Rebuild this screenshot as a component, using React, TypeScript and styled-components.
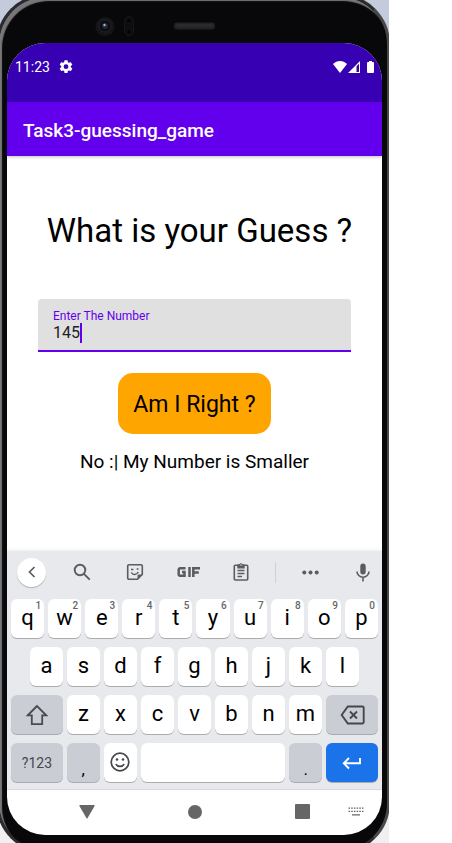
import React, { useState } from "react";
import styled, { createGlobalStyle } from "styled-components";

const Global = createGlobalStyle`
  * { box-sizing: border-box; }
  body { margin: 0; background: #fff; font-family: Roboto, "Noto Sans", sans-serif; color: #000; }
  button, input { font: inherit; color: inherit; }
  button { border: 0; margin: 0; padding: 0; cursor: pointer; background: none; }
`;

const Stage = styled.div`
  margin-right: 63px;
  min-height: 100vh;
  display: flex;
  background: linear-gradient(#c3cbdd 0 50%, #f0f0f0 50%);
  overflow: hidden;
`;

const Device = styled.div`
  flex: 1;
  min-width: 0;
  display: flex;
  flex-direction: column;
  margin: -6px -1px -10px -4px;
  padding: 0 5px 15px 8px;
  background: #08080a;
  border: 3px solid #2c2c2e;
  border-right-color: #48484a;
  border-radius: 50px;
  box-shadow: inset 3px 4px 1px #77777a;
`;

const Bezel = styled.div`
  flex: 0 0 46px;
  display: flex;
  justify-content: center;
  padding: 5px 60px 0 0;
`;

const Screen = styled.main`
  flex: 1;
  display: flex;
  flex-direction: column;
  background: #fff;
  border-radius: 38px;
  overflow: hidden;
`;

const StatusBar = styled.header`
  height: 59px;
  flex: none;
  display: flex;
  align-items: flex-start;
  justify-content: space-between;
  padding: 15px 8px 0 8px;
  background: #3700b3;
  color: #fff;
  font-size: 14px;
  line-height: 18px;
`;

const StatusGroup = styled.div<{ $gap: number }>`
  display: flex;
  align-items: center;
  gap: ${(p) => p.$gap}px;
  height: 18px;
`;

const AppBar = styled.div`
  height: 54px;
  flex: none;
  display: flex;
  align-items: center;
  padding: 4px 16px 0;
  background: #6200ee;
  color: #fff;
  box-shadow: 0 1px 3px rgba(0, 0, 0, 0.25);
`;

const AppTitle = styled.h1`
  margin: 0;
  font-size: 19px;
  line-height: 24px;
  font-weight: 500;
`;

const Content = styled.form`
  flex: 1;
  display: flex;
  flex-direction: column;
  align-items: center;
  padding: 55px 31px 0 31px;
`;

const Question = styled.h2`
  margin: 0 0 48px 10px;
  font-size: 33px;
  line-height: 40px;
  font-weight: 400;
  white-space: nowrap;
`;

const Field = styled.label`
  width: 100%;
  height: 53px;
  display: flex;
  flex-direction: column;
  padding: 10px 15px 0;
  background: #e0e0e0;
  border-bottom: 2px solid #6200ee;
  border-radius: 4px 4px 0 0;
`;

const FieldLabel = styled.span`
  color: #6200ee;
  font-size: 12px;
  line-height: 14px;
`;

const Entry = styled.span`
  display: flex;
  align-items: center;
  height: 20px;
`;

const NumberInput = styled.input`
  field-sizing: content;
  border: 0;
  padding: 0;
  background: transparent;
  outline: none;
  color: #212121;
  font-size: 16px;
  line-height: 20px;
  caret-color: transparent;
`;

const Caret = styled.span`
  width: 2px;
  height: 20px;
  background: #6200ee;
`;

const GuessButton = styled.button`
  margin-top: 21px;
  height: 61px;
  padding: 2px 15px 0;
  background: #ffa500;
  border-radius: 15px;
  font-size: 23px;
  line-height: 28px;
`;

const Result = styled.p`
  margin: 16px 0;
  font-size: 19px;
  line-height: 24px;
`;

const Keyboard = styled.section`
  flex: none;
  background: #e8e9ed;
  padding: 0 4px 7px;
  box-shadow: 0 -1px 3px rgba(0, 0, 0, 0.08);
  border-bottom: 1px solid #d8d9dc;
`;

const Tools = styled.div`
  height: 48px;
  display: flex;
  align-items: center;
  justify-content: space-between;
  padding: 0 3px 6px 6px;
  color: #5b5c60;
`;

const ToolGroup = styled.div<{ $gap: number }>`
  display: flex;
  align-items: center;
  gap: ${(p) => p.$gap}px;
`;

const Tool = styled.button<{ $round?: boolean }>`
  width: ${(p) => (p.$round ? 29 : 24)}px;
  height: ${(p) => (p.$round ? 29 : 24)}px;
  margin-right: ${(p) => (p.$round ? -5 : 0)}px;
  display: grid;
  place-items: center;
  border-radius: 50%;
  background: ${(p) => (p.$round ? "#fff" : "none")};
  box-shadow: ${(p) => (p.$round ? "0 1px 1px rgba(0,0,0,.25)" : "none")};
`;

const Divider = styled.span`
  width: 1px;
  height: 21px;
  background: #cfd0d4;
`;

const KeyRow = styled.div<{ $inset?: boolean }>`
  display: flex;
  gap: 4px;
  padding: 0 ${(p) => (p.$inset ? 19 : 0)}px;
  margin-bottom: 9px;
  &:last-child { margin-bottom: 0; }
`;

const Key = styled.button<{ $grow?: number; $tone?: "grey" | "blue"; $small?: boolean; $low?: boolean }>`
  position: relative;
  flex: ${(p) => p.$grow ?? 33} 1 0;
  min-width: 0;
  height: 39px;
  display: grid;
  place-items: center;
  padding-top: ${(p) => (p.$low ? 12 : 0)}px;
  padding-bottom: ${(p) => (p.$grow || p.$low ? 0 : 2)}px;
  border-radius: 6px;
  background: ${(p) => (p.$tone === "blue" ? "#1a73e8" : p.$tone === "grey" ? "#cbcdd5" : "#fff")};
  color: ${(p) => (p.$tone === "blue" ? "#fff" : p.$small ? "#46474b" : "#000")};
  box-shadow: 0 1px 0 rgba(0, 0, 0, 0.26);
  font-size: ${(p) => (p.$small ? 14 : p.$low ? 17 : 22)}px;
  line-height: 26px;
`;

const Hint = styled.small`
  position: absolute;
  top: 1px;
  right: 3px;
  color: #65666a;
  font-size: 10px;
  line-height: 12px;
  font-weight: 500;
`;

const NavRow = styled.nav`
  flex: none;
  height: 45px;
  display: flex;
  align-items: center;
  justify-content: space-between;
  padding: 0 18px 2px 72px;
  color: #666;
`;

const NavTail = styled.div`
  display: flex;
  align-items: center;
  gap: 38px;
`;

const NavButton = styled.button`
  display: grid;
  place-items: center;
  height: 32px;
`;

const BezelArt = () => (
  <svg width="144" height="41" viewBox="0 0 144 41" aria-hidden="true">
    <circle cx="12" cy="24.500" r="9.500" fill="#151517" />
    <circle cx="12" cy="24" r="6" fill="#0b0c10" stroke="#222327" />
    <circle cx="12" cy="24" r="3" fill="#20283a" />
    <circle cx="11.500" cy="23" r="1.200" fill="#a9b3c8" />
    <rect x="31.500" y="14.500" width="9" height="19" rx="4.500" fill="#0d0d0e" stroke="#161617" />
    <circle cx="36" cy="18.500" r="3" fill="#050506" stroke="#151516" />
    <circle cx="36" cy="29.500" r="3" fill="#050506" stroke="#151516" />
    <rect x="81" y="20.500" width="41" height="7" rx="3" fill="#222" />
    <rect x="83" y="22" width="37" height="3" rx="1.500" fill="#2b2b2b" />
  </svg>
);

const GEAR =
  "M19.140 12.940c.04-.3.060-.61.060-.94s-.02-.64-.07-.94l2.030-1.580a.49.49 0 0 0 .12-.61l-1.920-3.320a.49.49 0 0 0-.59-.22l-2.390.96a7 7 0 0 0-1.620-.94l-.36-2.540a.48.48 0 0 0-.48-.41h-3.840a.48.48 0 0 0-.47.410l-.36 2.540a7 7 0 0 0-1.620.940l-2.390-.96a.48.48 0 0 0-.59.220L2.740 8.870a.48.48 0 0 0 .12.610l2.030 1.580a6 6 0 0 0 0 1.880l-2.030 1.580a.49.49 0 0 0-.12.610l1.920 3.320c.12.220.37.290.59.220l2.390-.96c.5.380 1.030.7 1.620.940l.36 2.540c.05.240.240.410.480.410h3.840c.240 0 .44-.17.470-.41l.36-2.540a7 7 0 0 0 1.620-.94l2.390.96c.22.080.47 0 .59-.22l1.920-3.320a.48.48 0 0 0-.12-.61zM12 15.600A3.600 3.600 0 1 1 12 8.400a3.600 3.600 0 0 1 0 7.200z";

const Gear = () => (
  <svg width="14" height="14" viewBox="1.500 2 21 21" fill="currentColor" aria-hidden="true"><path fillRule="evenodd" d={GEAR} /></svg>
);
const Wifi = () => (
  <svg width="14" height="12" viewBox="0 0 14 12" fill="currentColor" aria-hidden="true"><path d="M0 3C2 1 4.300 0 7 0s5 1 7 3L7 12z" /></svg>
);
const Signal = () => (
  <svg width="12" height="12" viewBox="0 0 12 12" fill="currentColor" aria-hidden="true">
    <path fillRule="evenodd" d="M0 12 12 0v12zM11 2.800V11H8.500V5.300z" />
  </svg>
);
const Battery = () => (
  <svg width="7" height="12" viewBox="0 0 7 12" fill="currentColor" aria-hidden="true"><path d="M2 0h3v1h1a1 1 0 0 1 1 1v9a1 1 0 0 1-1 1H1a1 1 0 0 1-1-1V2a1 1 0 0 1 1-1h1z" /></svg>
);
const Back = () => (
  <svg width="16" height="16" viewBox="0 0 16 16" fill="none" stroke="currentColor" strokeWidth="1.700" aria-hidden="true"><path d="M10.500 3 5.500 8l5 5" /></svg>
);
const Search = () => (
  <svg width="18" height="18" viewBox="0 0 18 18" fill="none" stroke="currentColor" strokeWidth="1.900" aria-hidden="true"><circle cx="7" cy="7" r="5.300" /><path d="m10.700 10.700 6 6" /></svg>
);
const Sticker = () => (
  <svg width="18" height="18" viewBox="0 0 18 18" fill="none" stroke="currentColor" strokeWidth="1.600" aria-hidden="true">
    <path d="M3 1.800h12a1.300 1.300 0 0 1 1.300 1.300v8.400l-4.800 4.800H3A1.300 1.300 0 0 1 1.700 15V3.100A1.300 1.300 0 0 1 3 1.800z" />
    <path d="M16 11.500h-3.200a1.300 1.300 0 0 0-1.300 1.300V16z" fill="currentColor" stroke="none" />
    <path d="M5.300 9.500c1.500 2.700 5.500 2.500 7-.5M5 6.500h2.400M10.700 6.100h1.800" strokeWidth="1.500" />
  </svg>
);
const Gif = () => (
  <svg width="23" height="12" viewBox="0 0 23 12" fill="none" stroke="currentColor" strokeWidth="2.500" aria-hidden="true">
    <path d="M8.500 2.300H3.200a1.500 1.500 0 0 0-1.500 1.500v4.400a1.500 1.500 0 0 0 1.500 1.500h4.300V6H5M12.500 1v10M16.300 11V2.300H23M16.300 6.500h5.500" />
  </svg>
);
const Clipboard = () => (
  <svg width="16" height="20" viewBox="0 0 16 20" fill="none" stroke="currentColor" strokeWidth="1.600" aria-hidden="true">
    <rect x="1.300" y="3.300" width="13.400" height="14.700" rx="1" />
    <path d="M4.300 2.500h2a1.800 1.800 0 0 1 3.400 0h2v4H4.300z" fill="currentColor" stroke="none" />
    <circle cx="8" cy="3" r=".7" fill="#e8e9ed" stroke="none" />
    <path d="M4.500 8.500h7M4.500 11.500h7M4.500 14.500h4.500" strokeWidth="1.400" />
  </svg>
);
const Dots = () => (
  <svg width="17" height="5" viewBox="0 0 17 5" fill="currentColor" aria-hidden="true"><circle cx="2.300" cy="2.500" r="2" /><circle cx="8.500" cy="2.500" r="2" /><circle cx="14.700" cy="2.500" r="2" /></svg>
);
const Mic = () => (
  <svg width="14" height="19" viewBox="0 0 14 19" fill="none" stroke="currentColor" strokeWidth="1.600" aria-hidden="true">
    <rect x="4.300" y="0.500" width="5.400" height="11" rx="2.700" fill="currentColor" stroke="none" />
    <path d="M1 8.500a6 5.700 0 0 0 12 0M7 14v4.500" />
  </svg>
);
const Shift = () => (
  <svg width="22" height="22" viewBox="0 0 22 22" fill="none" stroke="#4a4b50" strokeWidth="1.800" aria-hidden="true"><path d="M11 2 1.800 11.300h4v8.800h10.400v-8.800h4z" /></svg>
);
const Delete = () => (
  <svg width="25" height="20" viewBox="0 0 25 20" fill="none" stroke="#46474b" strokeWidth="1.900" aria-hidden="true"><path d="M7.800 1.500h14.700a1.200 1.200 0 0 1 1.200 1.200v14.600a1.200 1.200 0 0 1-1.200 1.200H7.800L1.700 10zM10 6.500l7 7M17 6.500l-7 7" /></svg>
);
const Smile = () => (
  <svg width="20" height="20" viewBox="0 0 20 20" fill="none" stroke="#46474b" strokeWidth="1.700" aria-hidden="true">
    <circle cx="10" cy="10" r="8.800" /><path d="M5.800 12.200c1.700 3 6.700 3 8.400 0" />
    <circle cx="7" cy="7.500" r="1.300" fill="#46474b" stroke="none" /><circle cx="13" cy="7.500" r="1.300" fill="#46474b" stroke="none" />
  </svg>
);
const Enter = () => (
  <svg width="20" height="14" viewBox="0 0 20 14" fill="none" stroke="currentColor" strokeWidth="1.900" aria-hidden="true"><path d="M18 2v5.300H2.500M7 2 1.800 7.300 7 12.500" /></svg>
);
const Triangle = () => (
  <svg width="16" height="14" viewBox="0 0 16 14" fill="currentColor" aria-hidden="true"><path d="M1 0h14q1 0 .6 1L8.600 13q-.6 1-1.200 0L.4 1Q0 0 1 0z" /></svg>
);
const Circle = () => (
  <svg width="14" height="14" viewBox="0 0 14 14" fill="currentColor" aria-hidden="true"><circle cx="7" cy="7" r="7" /></svg>
);
const Square = () => (
  <svg width="15" height="15" viewBox="0 0 15 15" fill="currentColor" aria-hidden="true"><rect width="15" height="15" rx="1" /></svg>
);
const KeyboardIcon = () => (
  <svg width="16" height="9" viewBox="0 0 16 9" fill="none" stroke="currentColor" strokeWidth="1.300" aria-hidden="true">
    <path d="M.5 1.200h15M.5 4.400h15" strokeDasharray="1.600 1.100" /><path d="M4 7.900h8" />
  </svg>
);

const TOP = "qwertyuiop".split("");
const HOME = "asdfghjkl".split("");
const BOTTOM = "zxcvbnm".split("");

export default function App() {
  const [guess, setGuess] = useState("145");
  const type = (s: string) => () => setGuess((g) => g + s);

  return (
    <>
      <Global />
      <Stage>
        <Device>
          <Bezel><BezelArt /></Bezel>
          <Screen>
            <StatusBar>
              <StatusGroup $gap={9}><time>11:23</time><Gear /></StatusGroup>
              <StatusGroup $gap={7}>
                <StatusGroup $gap={1}><Wifi /><Signal /></StatusGroup>
                <Battery />
              </StatusGroup>
            </StatusBar>
            <AppBar><AppTitle>Task3-guessing_game</AppTitle></AppBar>
            <Content onSubmit={(e) => e.preventDefault()}>
              <Question>What is your Guess ?</Question>
              <Field>
                <FieldLabel>Enter The Number</FieldLabel>
                <Entry>
                  <NumberInput inputMode="numeric" value={guess} onChange={(e) => setGuess(e.target.value)} />
                  <Caret />
                </Entry>
              </Field>
              <GuessButton type="submit">Am I Right ?</GuessButton>
              <Result>No :| My Number is Smaller</Result>
            </Content>
            <Keyboard aria-label="Keyboard">
              <Tools>
                <ToolGroup $gap={22}>
                  <ToolGroup $gap={29}>
                    <Tool $round aria-label="Back"><Back /></Tool>
                    <Tool aria-label="Search"><Search /></Tool>
                    <Tool aria-label="Stickers"><Sticker /></Tool>
                    <Tool aria-label="GIF"><Gif /></Tool>
                    <Tool aria-label="Clipboard"><Clipboard /></Tool>
                  </ToolGroup>
                  <Divider />
                  <Tool aria-label="More"><Dots /></Tool>
                </ToolGroup>
                <Tool aria-label="Voice input"><Mic /></Tool>
              </Tools>
              <KeyRow>
                {TOP.map((k, i) => (
                  <Key key={k} onClick={type(k)}>{k}<Hint>{(i + 1) % 10}</Hint></Key>
                ))}
              </KeyRow>
              <KeyRow $inset>{HOME.map((k) => <Key key={k} onClick={type(k)}>{k}</Key>)}</KeyRow>
              <KeyRow>
                <Key $grow={52} $tone="grey" aria-label="Shift"><Shift /></Key>
                {BOTTOM.map((k) => <Key key={k} onClick={type(k)}>{k}</Key>)}
                <Key $grow={52} $tone="grey" aria-label="Delete" onClick={() => setGuess((g) => g.slice(0, -1))}><Delete /></Key>
              </KeyRow>
              <KeyRow>
                <Key $grow={52} $tone="grey" $small>?123</Key>
                <Key $tone="grey" $low onClick={type(",")}>,</Key>
                <Key aria-label="Emoji"><Smile /></Key>
                <Key $grow={145} aria-label="Space" onClick={type(" ")} />
                <Key $tone="grey" $low onClick={type(".")}>.</Key>
                <Key $grow={52} $tone="blue" aria-label="Enter"><Enter /></Key>
              </KeyRow>
            </Keyboard>
            <NavRow>
              <NavButton aria-label="Hide keyboard"><Triangle /></NavButton>
              <NavButton aria-label="Home"><Circle /></NavButton>
              <NavTail>
                <NavButton aria-label="Recents"><Square /></NavButton>
                <NavButton aria-label="Switch keyboard"><KeyboardIcon /></NavButton>
              </NavTail>
            </NavRow>
          </Screen>
        </Device>
      </Stage>
    </>
  );
}
